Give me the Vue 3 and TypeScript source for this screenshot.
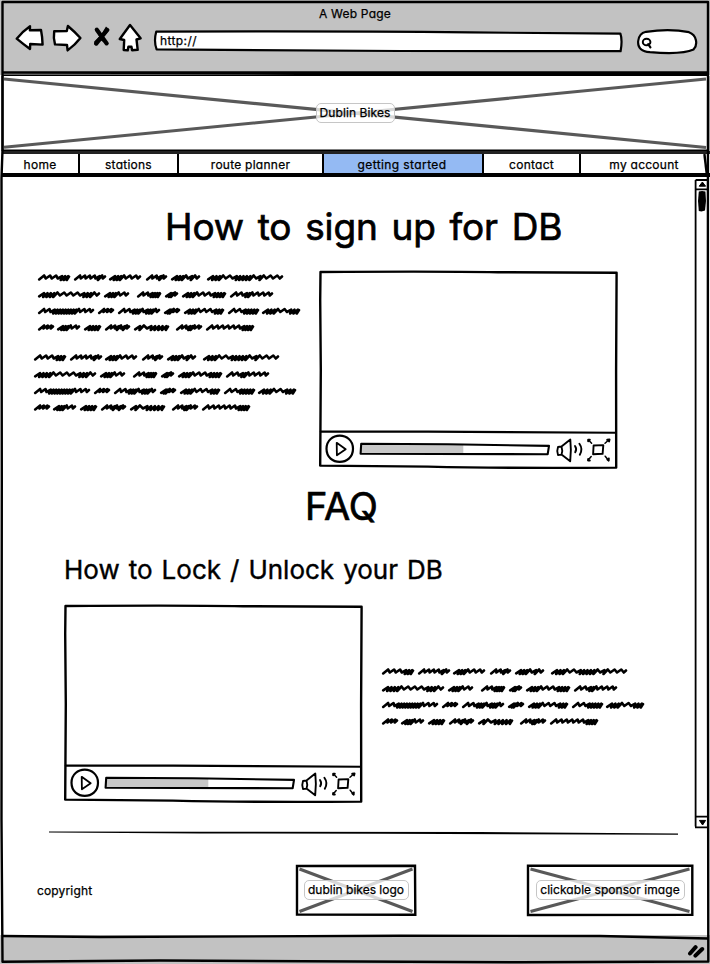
<script setup lang="ts">
import { h, type FunctionalComponent } from 'vue'

interface NavItem {
  label: string
  cls: string
  active?: boolean
}

const navItems: NavItem[] = [
  { label: 'home', cls: 'n-home' },
  { label: 'stations', cls: 'n-stations' },
  { label: 'route planner', cls: 'n-route' },
  { label: 'getting started', cls: 'n-started', active: true },
  { label: 'contact', cls: 'n-contact' },
  { label: 'my account', cls: 'n-account' },
]

// Each squiggle word is [start x, end x, stroke rhythm]:
// "l" is an open wave and "d" is a tight one.
type Word = [number, number, string]
const lines: Word[][] = [
  [[2, 34, 'lllddd'], [38, 70, 'lllldl'], [73, 105, 'dddlll'], [110, 131, 'lldl'], [135, 164, 'dddldl'], [171, 247, 'dddlldddddldlll']],
  [[2, 64, 'ddddlllldddl'], [68, 93, 'dddll'], [101, 125, 'lldddd'], [129, 142, 'ddl'], [146, 190, 'dddllldddd'], [194, 237, 'llddllll']],
  [[2, 58, 'lldddddddddlll'], [62, 78, 'lll'], [82, 124, 'lldddldddl'], [128, 144, 'ddll'], [148, 188, 'dddlllddd'], [192, 223, 'llddddd'], [226, 264, 'dddllddd']],
  [[2, 18, 'lll'], [21, 44, 'dddll'], [48, 65, 'dddd'], [69, 94, 'lldldl'], [98, 133, 'dlddddd'], [140, 166, 'llddll'], [170, 218, 'lllllldddd']],
]
const lineY = [7.5, 24.5, 41, 57.5]
const LOOSE = 2

function squiggle([from, to, rhythm]: Word, y: number): string {
  const units = [...rhythm].reduce((n, c) => n + (c === 'l' ? LOOSE : 1), 0)
  const unit = (to - from - 5) / units
  let x = from + 1.2
  let d = `M${x} ${y + 1.9}`
  for (const c of rhythm) {
    const step = (c === 'l' ? LOOSE : 1) * unit
    const top = c === 'l' ? y - 2 : y - 1.3
    const base = c === 'l' ? y + 1 : y + 2.5
    d += `L${(x + 4.9).toFixed(1)} ${top}`
    x += step
    d += `L${(x + 0.6).toFixed(1)} ${base}`
  }
  return d + `L${to - 1} ${y - 1}`
}
const scribblePath = lines.map((words, i) => words.map((w) => squiggle(w, lineY[i])).join('')).join('')

const Scribble: FunctionalComponent = () =>
  h('svg', { width: 268, height: 66, viewBox: '0 0 268 66' }, [
    h('path', {
      d: scribblePath,
      fill: 'none',
      stroke: '#000',
      'stroke-width': 2.6,
      'stroke-linecap': 'round',
      'stroke-linejoin': 'round',
    }),
  ])

const line = (d: string, width = 2.1, fill = 'none') =>
  h('path', { d, fill, stroke: '#000', 'stroke-width': width, 'stroke-linejoin': 'round', 'stroke-linecap': 'round' })

const VideoPlayer: FunctionalComponent = () =>
  h('svg', { width: 301, height: 200, viewBox: '0 0 301 200' }, [
    line('M2.5 2Q120 1.2 180 2.2L298.6 2.8L298.1 100L298.2 197.6Q190 198.4 110 196.6L2.2 195.6L2.8 100L2.2 30Z', 2.4, '#fff'),
    line('M2.8 161.6L110 161.6L298 162.8'),
    line('M8.5 178.8C8.5 161.3 35 161.3 35 178.8C35 196.3 8.5 196.3 8.5 178.8Z', 2.2),
    line('M18.7 172.8L27.7 179.3L18.9 185.2Z', 1.8),
    h('path', { d: 'M43.2 173.8L145.3 174.8V184L42.6 183.8Z', fill: '#c8c8c8' }),
    line('M43.2 173.8L130 174.3L231 175.9L229.7 184.2L42.6 183.8Z'),
    line('M240 177Q238.5 181 240 185L243.5 184.6Q245 181 243.5 176.5ZM243.5 176.5L252.3 169.5Q253.5 180 252.2 191.2L243.8 184.8', 1.9),
    line('M257 176Q259.2 179 257.2 182.3M261.4 173.8Q265.2 179 261.8 184.8', 1.9),
    line('M275.6 175.5L285.3 175.1L284.6 183.8L275.1 184.2Z', 1.9),
    line('M273.6 173.3L270.5 170M287 173.2L291 169.8M273.2 186.6L270 190.3M287.2 186.2L290.5 190.4', 1.5),
    line('M270.2 171.2V169.8H271.8M289.2 169.8L291.5 169.4L291 171.4M270.2 189V190.4H271.8M289.4 189.6L290.6 190.6L290.8 188.4', 2),
  ])
</script>

<template>
  <div class="browser">
    <header class="chrome">
      <div class="title">A Web Page</div>
      <div class="toolbar">
        <svg class="buttons" width="128" height="32" viewBox="14 21 128 32">
          <g fill="#fff" stroke="#000" stroke-width="2.4" stroke-linejoin="round">
            <path d="M16.7 37.7Q23 30 30 25.2L29.9 29.2L41 29Q42.4 36 42.6 43.6L30.2 43L30 48Q23 43 16.7 37.7Z" />
            <path d="M54.2 30.3L66.8 30L67.9 25Q75 31 80.4 37Q75 44 67.6 49.4L67 44L55 43.4Q53.2 37 54.2 30.3Z" />
            <path d="M119.8 38L130 24L140.6 37.3L136.5 38.5L137.7 48.8L132 49.2L131.5 45.8L128.4 45.8L127.7 49.4L123.7 49L124.2 39Z" />
          </g>
          <path d="M96.8 28.8L106.7 42.4M107.2 29L96.2 42.6" fill="none" stroke="#000" stroke-width="4.2" stroke-linecap="round" />
          <path d="M95.2 26.4L101.6 32.8L106 25.6L109.6 29L103.6 35.7L107.8 44L101 39.4L94.4 44L94.2 40.5L99.2 35.6Z" />
        </svg>
        <div class="url">
          <svg width="470" height="23" viewBox="153 30 470 23">
            <path d="M156.2 31.7Q330 31 470 32.4L620.4 33.7Q622.6 40 620.6 51.2L400 51L156.6 49.4Q153.6 41 156.2 31.7Z" fill="#fff" stroke="#000" stroke-width="2.2" stroke-linejoin="round" />
          </svg>
          <span>http://</span>
        </div>
        <svg width="62" height="27" viewBox="636 27 62 27">
          <path d="M646 30.8C660 28.8 678 29 689 31.2C697 34 698 44 693.5 48.6C684 53 660 52 650 51.2C640 50 637.6 46 638.2 40C638.7 35 641 32 646 30.8Z" fill="#fff" stroke="#000" stroke-width="2.2" />
          <ellipse cx="646.6" cy="41" rx="3.8" ry="3.3" fill="none" stroke="#000" stroke-width="2" />
          <path d="M648.2 43.2L650.4 46.3" stroke="#000" stroke-width="2.2" stroke-linecap="round" />
        </svg>
      </div>
    </header>

    <section class="banner">
      <svg width="710" height="77" viewBox="0 75 710 77">
        <path d="M4 79L706 147.5M4 147.3L706 79" stroke="#595959" stroke-width="3.1" />
        <path d="M2 150.2H709" stroke="#000" stroke-width="1.6" />
        <path d="M2.5 76V151M708.3 76V151" stroke="#000" stroke-width="2" />
      </svg>
      <span class="tag t-banner">Dublin Bikes</span>
    </section>

    <nav>
      <a v-for="item in navItems" :key="item.label" :class="[item.cls, { active: item.active }]">{{ item.label }}</a>
    </nav>

    <div class="viewport">
      <main>
        <h1>How to sign up for DB</h1>
        <div class="intro">
          <div class="copy">
            <Scribble />
            <Scribble class="second" />
          </div>
          <VideoPlayer />
        </div>
        <h1 class="faq">FAQ</h1>
        <h2>How to Lock / Unlock your DB</h2>
        <div class="lock">
          <VideoPlayer />
          <Scribble />
        </div>
      </main>
      <svg class="scrollbar" width="16" height="652" viewBox="694 178 16 652">
        <path d="M695.6 181V827.5M695.6 181H708M696 190.3H708M696 817.6H708M695 828.4H708" fill="none" stroke="#000" stroke-width="1.8" />
        <path d="M702.4 183L705.6 187.2H699.2ZM699.4 821.4H705.6L702.6 826Z" stroke="#000" />
        <path d="M698.8 192.6Q702 191.6 705.4 192.6L706 202L705 211.6Q702 213 698.8 212L698 202Z" />
      </svg>
    </div>

    <footer>
      <svg class="rule" width="630" height="5" viewBox="49 830 630 5">
        <path d="M49 831.6L200 831.8L480 832L678 833.6L678 834.8L380 833.8L200 833.4L49 832.6Z" />
      </svg>
      <div class="foot-row">
        <span class="copyright">copyright</span>
        <div class="image logo">
          <svg width="122" height="53" viewBox="0 0 122 53">
            <path d="M2 2L120 1.8L120.3 50.8L2 50.5Z" fill="#fff" stroke="#000" stroke-width="2.4" />
            <path d="M4.5 5L117.5 47.5M4.5 47.5L117.5 5" stroke="#595959" stroke-width="3" />
          </svg>
          <span class="tag t-logo">dublin bikes logo</span>
        </div>
        <div class="image">
          <svg width="168" height="53" viewBox="0 0 168 53">
            <path d="M2 1.6L166.3 1.8V50.8L2 51Z" fill="#fff" stroke="#000" stroke-width="2.4" />
            <path d="M4.5 5L163.5 47.5M4.5 47.5L163.5 5" stroke="#595959" stroke-width="3" />
          </svg>
          <span class="tag t-sponsor">clickable sponsor image</span>
        </div>
      </div>
    </footer>

    <div class="status">
      <svg width="18" height="14" viewBox="687 943 18 14">
        <path d="M690 952.5L695.6 946.2M695.4 954.6L702.2 948" stroke="#000" stroke-width="4" stroke-linecap="round" />
      </svg>
    </div>

    <svg class="frame" width="710" height="964" viewBox="0 0 710 964">
      <path d="M2 71.2H709V76H2V74.6L300 74.4L2 73.8Z" />
      <g fill="none" stroke="#000" stroke-width="2.4" stroke-linejoin="round">
        <path d="M2.5 2L708 2L707.8 470L708.3 961.5L520 962.3L160 960.5L2.5 961.8L1.5 820L1.8 480L1.5 178L2.5 150Z" />
        <path d="M2 936L100 937L400 935.8L600 936L708 938.5" />
        <path d="M704.4 154L707 176" />
      </g>
    </svg>
  </div>
</template>

<style>
body {
  background: #fff;
}
</style>

<style scoped>
.browser {
  position: relative;
  width: 710px;
  height: 964px;
  overflow: hidden;
  display: flex;
  flex-direction: column;
  background: #fff;
  color: #000;
  font-family: Inter, 'Liberation Sans', sans-serif;
  font-feature-settings: 'cv11', 'ss03';
  font-size: 12px;
  line-height: 16px;
  -webkit-text-stroke: 0.25px #000;
}
svg {
  display: block;
  flex: none;
}
.frame {
  position: absolute;
  inset: 0;
  pointer-events: none;
}
.chrome {
  height: 75px;
  background: #c2c2c2;
  box-sizing: border-box;
  padding-top: 6px;
}
.title {
  text-align: center;
  letter-spacing: 0.2px;
}
.toolbar {
  display: flex;
  align-items: center;
  height: 32px;
  padding: 0 12px 0 14px;
}
.url {
  display: grid;
  align-items: center;
  margin: 6px 13px 0 11px;
}
.url > *,
.banner > *,
.image > * {
  grid-area: 1 / 1;
}
.url span {
  padding: 0 0 1px 7px;
  letter-spacing: 0.4px;
}
.toolbar > svg:last-child {
  margin-top: 7px;
}
.banner,
.image {
  display: grid;
  place-items: center;
}
.banner {
  height: 77px;
}
.tag {
  z-index: 1;
  box-sizing: border-box;
  height: 20px;
  padding: 1px 0;
  border: 1px solid #c6c6c6;
  border-radius: 5px;
  background: rgba(255, 255, 255, 0.76);
  text-align: center;
  white-space: nowrap;
}
.t-banner {
  width: 79px;
  margin-bottom: 2px;
  letter-spacing: 0.1px;
}
.t-logo {
  width: 105px;
  margin-bottom: 1px;
}
.t-sponsor {
  width: 149px;
  margin-bottom: 1px;
  letter-spacing: 0.05px;
}
nav {
  display: flex;
  box-sizing: border-box;
  height: 26px;
  margin-left: 2px;
  border-top: 3px solid #222;
  border-bottom: 4px solid #000;
  margin-top: -1px;
}
nav a {
  box-sizing: border-box;
  border-right: 2px solid #000;
  text-align: center;
  line-height: 21px;
  letter-spacing: 0.25px;
}
nav a:last-child {
  border-right: 0;
}
.active {
  background: #94baf3;
}
.n-home { width: 78px; }
.n-stations { width: 99px; }
.n-route { width: 145px; }
.n-started { width: 160px; }
.n-contact { width: 97px; }
.n-account { width: 126px; }
nav .n-started {
  padding-right: 2px;
  letter-spacing: 0.4px;
}
.viewport {
  display: flex;
  height: 652px;
}
main {
  width: 694px;
}
h1,
h2 {
  margin: 0;
  font-weight: 400;
  white-space: nowrap;
}
h1 {
  padding: 27px 0 0 165px;
  font-size: 37px;
  line-height: 46px;
  letter-spacing: -0.1px;
  word-spacing: 3.4px;
  -webkit-text-stroke-width: 0.7px;
}
.intro {
  display: flex;
  gap: 18px;
  padding: 20px 0 0 36px;
}
.copy {
  width: 264px;
}
.second {
  margin: 14px 0 0 -4px;
}
h1.faq {
  padding: 13px 0 0 305px;
  font-size: 38px;
}
h2 {
  padding: 23px 0 0 64px;
  font-size: 26px;
  line-height: 36px;
  word-spacing: 1.7px;
  -webkit-text-stroke-width: 0.4px;
}
.lock {
  display: flex;
  gap: 16px;
  padding: 16px 0 0 63px;
}
.lock > :last-child {
  margin-top: 60px;
}
footer {
  height: 106px;
}
.rule {
  margin: 1px 0 0 49px;
}
.foot-row {
  display: flex;
  align-items: center;
  padding: 29px 0 0 37px;
}
.copyright {
  width: 258px;
  letter-spacing: 0.15px;
}
.logo {
  margin-right: 109px;
}
.status {
  flex: 1;
  display: flex;
  justify-content: flex-end;
  padding: 9px 5px 0 0;
  background: #c2c2c2;
}
</style>
